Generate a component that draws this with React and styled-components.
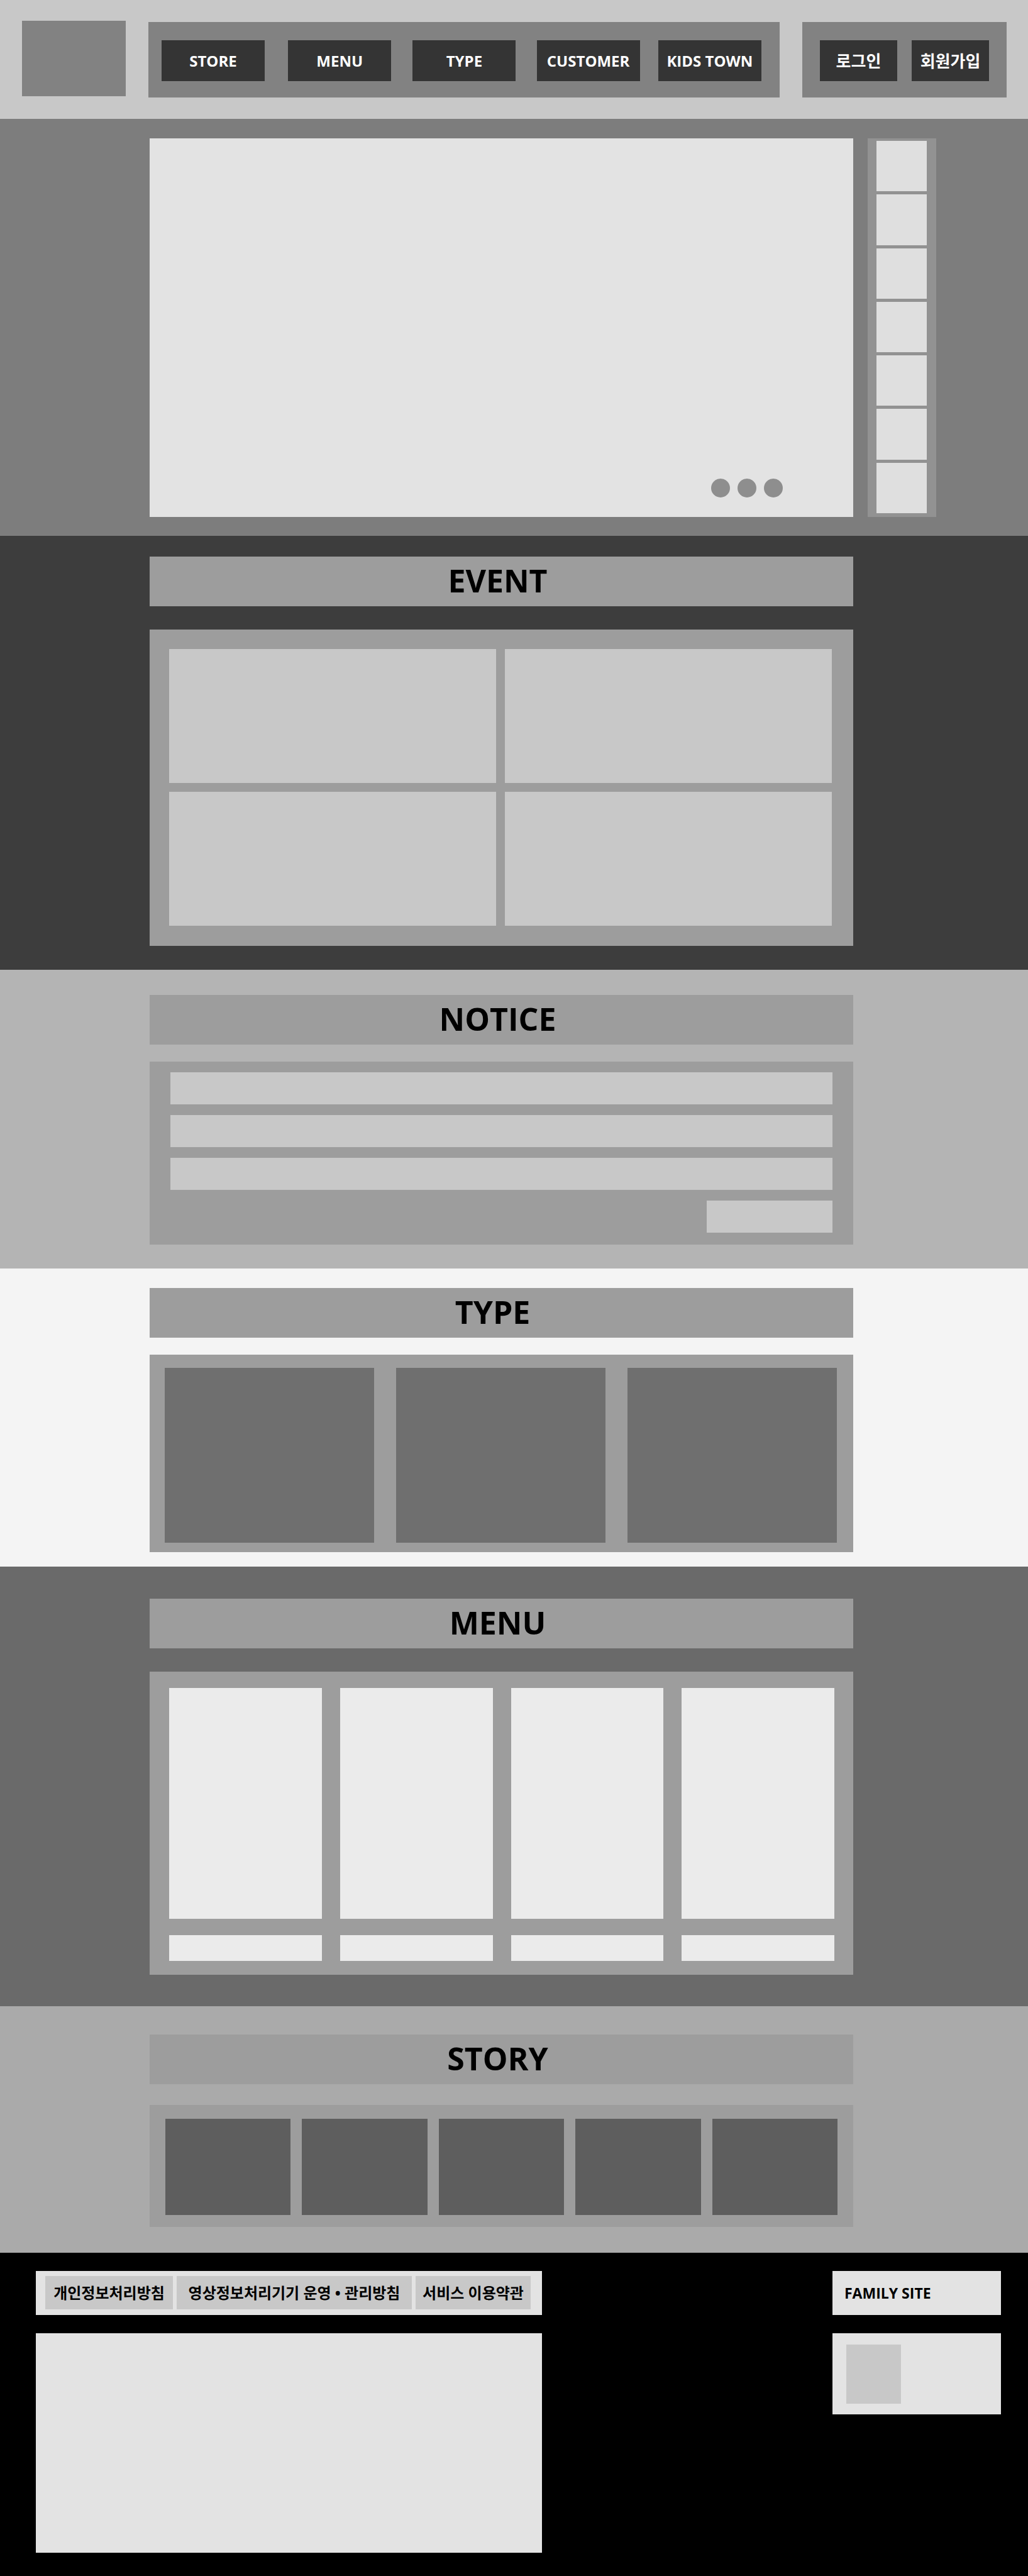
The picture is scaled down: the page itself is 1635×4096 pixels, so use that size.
import React from "react";
import styled, { createGlobalStyle } from "styled-components";

const GlobalStyle = createGlobalStyle`
  *, *::before, *::after { box-sizing: border-box; }
  body {
    margin: 0;
    background: #000000;
    color: #000000;
    font-family: "Open Sans", "Noto Sans CJK KR", sans-serif;
    font-weight: 700;
  }
  ul { margin: 0; padding: 0; list-style: none; }
  a { color: inherit; text-decoration: none; }
  button { border: 0; padding: 0; font: inherit; color: inherit; cursor: pointer; }
`;

const Header = styled.header`
  display: grid;
  grid-template-columns: 165px minmax(0, 1fr) 325px;
  column-gap: 36px;
  align-items: end;
  padding: 33px 34px 34px 35px;
  background: #c8c8c8;
`;

const Logo = styled.a`
  align-self: start;
  height: 120px;
  margin-bottom: 2px;
  background: #828282;
`;

const Nav = styled.nav`
  height: 120px;
  padding: 29px 29px 26px 21px;
  background: #828282;
`;

const NavList = styled.ul`
  display: grid;
  grid-template-columns: 201fr 198fr 197fr 193fr 164fr;
`;

const Account = styled.div`
  display: flex;
  justify-content: space-between;
  height: 120px;
  padding: 29px 28px 26px;
  background: #828282;
`;

const HeaderLink = styled.a`
  display: flex;
  align-items: center;
  justify-content: center;
  width: ${({ $width }) => $width}px;
  height: 65px;
  background: #343434;
  color: #ffffff;
  font-size: ${({ $size }) => $size}px;
  line-height: 32px;
  white-space: nowrap;
`;

const Hero = styled.section`
  display: grid;
  grid-template-columns: minmax(0, 1fr) 109px;
  gap: 23px;
  padding: 31px 146px 30px 238px;
  background: #7d7d7d;
`;

const Banner = styled.div`
  display: flex;
  align-items: flex-end;
  justify-content: flex-end;
  gap: 12px;
  height: 602px;
  padding: 0 112px 31px 0;
  background: #e3e3e3;
`;

const Dot = styled.button`
  width: 30px;
  height: 30px;
  border-radius: 50%;
  background: #8e8e8e;
`;

const QuickMenu = styled.ul`
  display: grid;
  grid-auto-rows: 1fr;
  gap: 5px;
  padding: 4px 15px 6px 14px;
  background: #929292;
`;

const QuickItem = styled.li`
  background: #dfdfdf;
`;

const Section = styled.section`
  display: flex;
  flex-direction: column;
  gap: ${({ $gap }) => $gap}px;
  padding: ${({ $top }) => $top}px 278px ${({ $bottom }) => $bottom}px 238px;
  background: ${({ $bg }) => $bg};
`;

const Title = styled.h2`
  margin: 0;
  padding: 3px ${({ $end = 12 }) => $end}px 6px 0;
  background: #9d9d9d;
  font-size: 50px;
  line-height: 70px;
  text-align: center;
`;

const Panel = styled.div`
  display: grid;
  grid-template-columns: repeat(${({ $columns }) => $columns}, minmax(0, 1fr));
  gap: ${({ $gap }) => $gap};
  padding: ${({ $padding }) => $padding};
  background: #9d9d9d;
`;

const Tile = styled.div`
  height: ${({ $height }) => $height}px;
  background: ${({ $bg }) => $bg};
`;

const MoreTile = styled(Tile)`
  width: 200px;
  justify-self: end;
`;

const Footer = styled.footer`
  display: grid;
  grid-template-columns: minmax(0, 805px) 268px;
  justify-content: space-between;
  padding: 29px 43px 37px 57px;
  background: #000000;
`;

const FooterColumn = styled.div`
  display: flex;
  flex-direction: column;
  gap: 29px;
`;

const Policies = styled.ul`
  display: grid;
  grid-template-columns: 203fr 374fr 183fr;
  gap: 6px;
  height: 70px;
  padding: 8px 18px 9px 15px;
  background: #e3e3e3;
`;

const PolicyLink = styled.a`
  display: flex;
  align-items: center;
  justify-content: center;
  height: 53px;
  background: #c8c8c8;
  font-size: 24px;
  line-height: 32px;
  white-space: nowrap;
`;

const Address = styled.div`
  height: 349px;
  background: #e3e3e3;
`;

const FamilyButton = styled.button`
  height: 70px;
  padding: 0 19px;
  background: #e3e3e3;
  font-size: 23px;
  line-height: 32px;
  text-align: left;
`;

const Certificate = styled.div`
  padding: 18px 22px 17px;
  background: #e3e3e3;
`;

const Mark = styled.div`
  width: 87px;
  height: 94px;
  background: #c8c8c8;
`;

const NAV_ITEMS = ["STORE", "MENU", "TYPE", "CUSTOMER", "KIDS TOWN"];
const ACCOUNT_ITEMS = ["로그인", "회원가입"];
const POLICY_ITEMS = ["개인정보처리방침", "영상정보처리기기 운영 • 관리방침", "서비스 이용약관"];

const range = (count) => Array.from({ length: count }, (_, i) => i);

const tiles = (count, height, bg) =>
  range(count).map((i) => <Tile key={`${height}-${i}`} $height={height} $bg={bg} />);

export default function App() {
  return (
    <>
      <GlobalStyle />
      <Header>
        <Logo href="#" aria-label="홈" />
        <Nav>
          <NavList>
            {NAV_ITEMS.map((item) => (
              <li key={item}>
                <HeaderLink href="#" $width={164} $size={24}>{item}</HeaderLink>
              </li>
            ))}
          </NavList>
        </Nav>
        <Account>
          {ACCOUNT_ITEMS.map((item) => (
            <HeaderLink key={item} href="#" $width={123} $size={26}>{item}</HeaderLink>
          ))}
        </Account>
      </Header>

      <main>
        <Hero>
          <Banner>
            {range(3).map((i) => (
              <Dot key={i} type="button" aria-label={`슬라이드 ${i + 1}`} />
            ))}
          </Banner>
          <QuickMenu>
            {range(7).map((i) => <QuickItem key={i} />)}
          </QuickMenu>
        </Hero>

        <Section $bg="#3d3d3d" $top={33} $gap={37} $bottom={38}>
          <Title>EVENT</Title>
          <Panel $columns={2} $gap="14px" $padding="31px 34px 32px 31px">
            {tiles(4, 213, "#c8c8c8")}
          </Panel>
        </Section>

        <Section $bg="#b4b4b4" $top={40} $gap={27} $bottom={38}>
          <Title>NOTICE</Title>
          <Panel $columns={1} $gap="17px" $padding="17px 33px 19px 33px">
            {tiles(3, 51, "#c8c8c8")}
            <MoreTile $height={51} $bg="#c8c8c8" />
          </Panel>
        </Section>

        <Section $bg="#f4f4f4" $top={31} $gap={27} $bottom={23}>
          <Title $end={28}>TYPE</Title>
          <Panel $columns={3} $gap="35px" $padding="21px 26px 15px 24px">
            {tiles(3, 278, "#6f6f6f")}
          </Panel>
        </Section>

        <Section $bg="#6a6a6a" $top={51} $gap={37} $bottom={50}>
          <Title>MENU</Title>
          <Panel $columns={4} $gap="26px 29px" $padding="26px 30px 22px 31px">
            {tiles(4, 367, "#ebebeb")}
            {tiles(4, 41, "#ebebeb")}
          </Panel>
        </Section>

        <Section $bg="#aaaaaa" $top={45} $gap={33} $bottom={41}>
          <Title>STORY</Title>
          <Panel $columns={5} $gap="18px" $padding="22px 25px 19px 25px">
            {tiles(5, 153, "#5e5e5e")}
          </Panel>
        </Section>
      </main>

      <Footer>
        <FooterColumn>
          <Policies>
            {POLICY_ITEMS.map((item) => (
              <li key={item}>
                <PolicyLink href="#">{item}</PolicyLink>
              </li>
            ))}
          </Policies>
          <Address />
        </FooterColumn>
        <FooterColumn>
          <FamilyButton type="button">FAMILY SITE</FamilyButton>
          <Certificate>
            <Mark />
          </Certificate>
        </FooterColumn>
      </Footer>
    </>
  );
}
